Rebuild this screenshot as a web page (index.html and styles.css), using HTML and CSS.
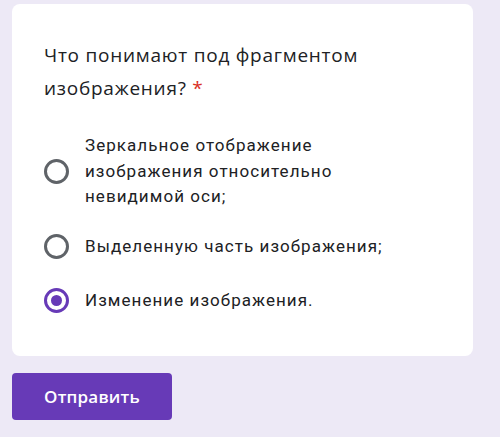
FILE: index.html
```html
<!DOCTYPE html>
<html lang="ru">
<head>
<meta charset="utf-8">
<link rel="stylesheet" href="styles.css">
</head>
<body>
<div class="page">
  <div class="card">
    <div class="question">Что понимают под фрагментом изображения?&nbsp;<span class="req">*</span></div>
    <div class="options">
      <div class="option multi">
        <span class="radio"></span>
        <span class="label">Зеркальное отображение изображения относительно невидимой оси;</span>
      </div>
      <div class="option">
        <span class="radio"></span>
        <span class="label">Выделенную часть изображения;</span>
      </div>
      <div class="option">
        <span class="radio checked"></span>
        <span class="label">Изменение изображения.</span>
      </div>
    </div>
  </div>
  <div class="actions">
    <button class="submit">Отправить</button>
  </div>
</div>
</body>
</html>
```
FILE: styles.css
```css
html, body {
  margin: 0;
  padding: 0;
  background: #ede9f6;
}
.page {
  width: 500px;
  height: 437px;
  padding: 4px 27px 0 12px;
  box-sizing: border-box;
}
.card {
  background: #ffffff;
  border-radius: 8px;
  padding: 35px 24px 30px 32px;
  height: 352px;
  box-sizing: border-box;
}
.question {
  font-family: "Open Sans", sans-serif;
  font-size: 19px;
  line-height: 33px;
  letter-spacing: 0.75px;
  color: #202124;
  width: 360px;
}
.req {
  color: #d93025;
}
.options {
  margin-top: 21px;
  display: flex;
  flex-direction: column;
  gap: 6px;
}
.option {
  display: flex;
  align-items: center;
  gap: 16px;
  min-height: 48px;
}
.option.multi {
  padding: 7px 0;
}
.radio {
  flex: none;
  width: 25px;
  height: 25px;
  border: 3px solid #5f6368;
  border-radius: 50%;
  box-sizing: border-box;
  position: relative;
}
.radio.checked {
  border-color: #673ab7;
}
.radio.checked::after {
  content: "";
  position: absolute;
  left: 50%;
  top: 50%;
  width: 11px;
  height: 11px;
  margin: -5.5px 0 0 -5.5px;
  border-radius: 50%;
  background: #673ab7;
}
.label {
  font-family: Roboto, sans-serif;
  font-size: 17px;
  line-height: 25.5px;
  letter-spacing: 1.05px;
  color: #202124;
  max-width: 310px;
}
.actions {
  margin-top: 17px;
}
.submit {
  width: 160px;
  height: 47px;
  border: none;
  border-radius: 4px;
  background: #673ab7;
  color: #ffffff;
  font-family: "Open Sans", sans-serif;
  font-weight: 600;
  font-size: 17px;
  letter-spacing: 0.2px;
}
```
